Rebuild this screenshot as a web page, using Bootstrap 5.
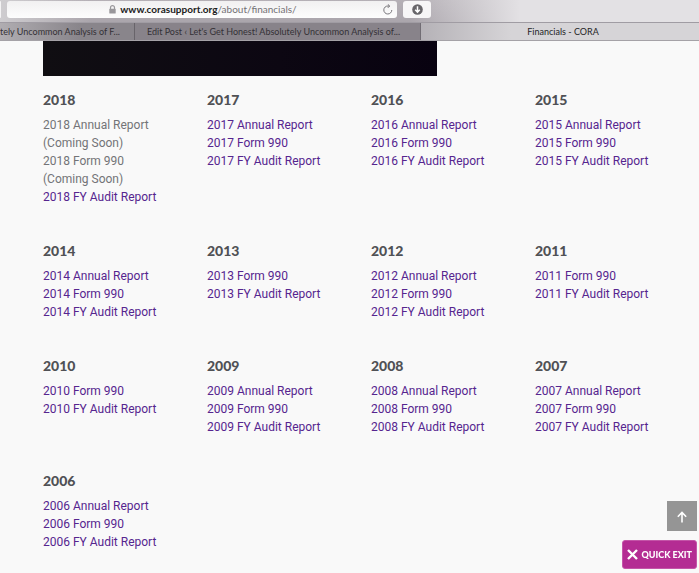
<!DOCTYPE html>
<html lang="en">
<head>
<meta charset="utf-8">
<meta name="viewport" content="width=device-width, initial-scale=1">
<title>Financials - CORA</title>
<link href="https://cdn.jsdelivr.net/npm/bootstrap@5.3.0/dist/css/bootstrap.min.css" rel="stylesheet">
<style>
body { background: #f9f9f9; font-family: Roboto, sans-serif; overflow-x: hidden; }
.chrome { font-family: Lato, sans-serif; background: linear-gradient(to right, #cfcdd0, transparent 90px), linear-gradient(to right, transparent 410px, #e3e1e4 520px), linear-gradient(#b5b0b6, #a19ca3); }
.toolbar { height: 22px; padding: 1px 0 4px; gap: 6px; }
.edge-btn { width: 1px; background: #f4f3f4; border-radius: 0 3px 3px 0; }
.address { width: 390px; height: 17px; background: linear-gradient(#f1f0f1, #fdfdfd); border-radius: 3px; }
.address-url { font-size: 10px; line-height: 17px; color: #737175; text-decoration: none; }
.address-url span { color: #202020; font-weight: 700; }
.plain-btn { border: 0; padding: 0; background: transparent; line-height: 0; }
.download { width: 28px; height: 17px; border: 0; padding: 0; border-radius: 3px; background: #f7f6f7; }
.tabstrip { height: 19px; border-top: 1px solid #a09ca3; border-bottom: 1px solid #a5a2a7; }
.tab-link { font-size: 9px; line-height: 17px; color: #343136; text-decoration: none; white-space: nowrap; background: #88838a; }
.tab-first { width: 135px; padding-right: 16px; border-right: 1px solid #68646a; background: linear-gradient(to right, #b0adb1, #89858b 80px); }
.tab-second { width: 286px; border-right: 1px solid #716d74; padding-right: 8px; }
.tab-active { padding-left: 6px; color: #252426; background: linear-gradient(to right, #b5b2b7, #d6d4d7 90px); }
.content { padding-left: 43px; }
.hero { width: 60%; height: 35px; background: linear-gradient(to right, #100e12, #0c0712 60%, #080210); margin-bottom: 15px; }
.years { row-gap: 36px; }
.year-title { font: 900 14px/18px Lato, sans-serif; color: #505155; margin: 0 0 7px; }
.reports { font-size: 12px; line-height: 18px; color: #737477; }
.reports a { color: #56258f; text-decoration: none; }
.floaters { right: 2px; bottom: 4px; gap: 9px; }
.to-top { width: 30px; height: 30px; border: 0; padding: 0; background: #959595; }
.quick-exit { height: 29px; padding: 0 4px; gap: 3px; border: 1px solid #c455a8; border-radius: 3px; background: #b42c93; color: #fff; font: 900 9px/27px Lato, sans-serif; }
</style>
<script src="https://cdn.jsdelivr.net/npm/bootstrap@5.3.0/dist/js/bootstrap.bundle.min.js"></script>
</head>
<body>
<header class="chrome">
  <div class="toolbar d-flex">
    <div class="edge-btn"></div>
    <div class="address d-flex align-items-center">
      <div class="flex-grow-1 d-flex justify-content-center align-items-center gap-1 ps-3">
        <svg width="7" height="9" viewBox="0 0 7 9" aria-hidden="true"><path d="M1.5 4V2.7a2 2 0 0 1 4 0V4" fill="none" stroke="#99979b" stroke-width="1.2"/><rect x=".3" y="3.8" width="6.4" height="4.8" rx=".6" fill="#99979b"/></svg>
        <a class="address-url" href="#"><span>www.corasupport.org</span>/about/financials/</a>
      </div>
      <button class="plain-btn me-1" type="button" aria-label="Reload"><svg width="10" height="11" viewBox="0 0 10 11" fill="none" stroke="#77757a" stroke-width="1"><path d="M8.8 6A4 4 0 1 1 5 2h1.5M4.8.3 6.7 2 4.8 3.9"/></svg></button>
    </div>
    <button class="download d-flex align-items-center justify-content-center" type="button" aria-label="Downloads"><svg width="11" height="11" viewBox="0 0 11 11"><circle cx="5.5" cy="5.5" r="5.3" fill="#68666a"/><path d="M5.5 2.3v5.6M3.2 5.8l2.3 2.4 2.3-2.4" fill="none" stroke="#fff" stroke-width="1.5"/></svg></button>
  </div>
  <nav class="tabstrip d-flex" aria-label="Tabs">
    <a class="tab-link tab-first flex-shrink-0 text-end" href="#">tely Uncommon Analysis of F...</a>
    <a class="tab-link tab-second flex-shrink-0 text-center" href="#">Edit Post ‹ Let's Get Honest! Absolutely Uncommon Analysis of...</a>
    <a class="tab-link tab-active flex-grow-1 text-center" href="#" aria-current="page">Financials - CORA</a>
  </nav>
</header>
<main class="content">
  <div class="hero"></div>
  <div class="row gx-0 years">
    <section class="col-3"><h2 class="year-title">2018</h2><ul class="reports list-unstyled mb-0"><li>2018 Annual Report<br>(Coming Soon)</li><li>2018 Form 990<br>(Coming Soon)</li><li><a href="#">2018 FY Audit Report</a></li></ul></section>
    <section class="col-3"><h2 class="year-title">2017</h2><ul class="reports list-unstyled mb-0"><li><a href="#">2017 Annual Report</a></li><li><a href="#">2017 Form 990</a></li><li><a href="#">2017 FY Audit Report</a></li></ul></section>
    <section class="col-3"><h2 class="year-title">2016</h2><ul class="reports list-unstyled mb-0"><li><a href="#">2016 Annual Report</a></li><li><a href="#">2016 Form 990</a></li><li><a href="#">2016 FY Audit Report</a></li></ul></section>
    <section class="col-3"><h2 class="year-title">2015</h2><ul class="reports list-unstyled mb-0"><li><a href="#">2015 Annual Report</a></li><li><a href="#">2015 Form 990</a></li><li><a href="#">2015 FY Audit Report</a></li></ul></section>
    <section class="col-3"><h2 class="year-title">2014</h2><ul class="reports list-unstyled mb-0"><li><a href="#">2014 Annual Report</a></li><li><a href="#">2014 Form 990</a></li><li><a href="#">2014 FY Audit Report</a></li></ul></section>
    <section class="col-3"><h2 class="year-title">2013</h2><ul class="reports list-unstyled mb-0"><li><a href="#">2013 Form 990</a></li><li><a href="#">2013 FY Audit Report</a></li></ul></section>
    <section class="col-3"><h2 class="year-title">2012</h2><ul class="reports list-unstyled mb-0"><li><a href="#">2012 Annual Report</a></li><li><a href="#">2012 Form 990</a></li><li><a href="#">2012 FY Audit Report</a></li></ul></section>
    <section class="col-3"><h2 class="year-title">2011</h2><ul class="reports list-unstyled mb-0"><li><a href="#">2011 Form 990</a></li><li><a href="#">2011 FY Audit Report</a></li></ul></section>
    <section class="col-3"><h2 class="year-title">2010</h2><ul class="reports list-unstyled mb-0"><li><a href="#">2010 Form 990</a></li><li><a href="#">2010 FY Audit Report</a></li></ul></section>
    <section class="col-3"><h2 class="year-title">2009</h2><ul class="reports list-unstyled mb-0"><li><a href="#">2009 Annual Report</a></li><li><a href="#">2009 Form 990</a></li><li><a href="#">2009 FY Audit Report</a></li></ul></section>
    <section class="col-3"><h2 class="year-title">2008</h2><ul class="reports list-unstyled mb-0"><li><a href="#">2008 Annual Report</a></li><li><a href="#">2008 Form 990</a></li><li><a href="#">2008 FY Audit Report</a></li></ul></section>
    <section class="col-3"><h2 class="year-title">2007</h2><ul class="reports list-unstyled mb-0"><li><a href="#">2007 Annual Report</a></li><li><a href="#">2007 Form 990</a></li><li><a href="#">2007 FY Audit Report</a></li></ul></section>
    <section class="col-3"><h2 class="year-title">2006</h2><ul class="reports list-unstyled mb-0"><li><a href="#">2006 Annual Report</a></li><li><a href="#">2006 Form 990</a></li><li><a href="#">2006 FY Audit Report</a></li></ul></section>
  </div>
</main>
<div class="floaters position-fixed d-flex flex-column align-items-end">
  <button class="to-top" type="button" aria-label="Back to top"><svg width="12" height="12" viewBox="0 0 12 12" fill="none" stroke="#fff" stroke-width="1.6"><path d="M6 11.5V1.5M1.8 5.8 6 1.5l4.2 4.3"/></svg></button>
  <button class="quick-exit d-flex align-items-center" type="button"><svg width="11" height="11" viewBox="0 0 11 11" stroke="#fff" stroke-width="2.4"><path d="m1 1 9 9M10 1l-9 9"/></svg>QUICK EXIT</button>
</div>
</body>
</html>
